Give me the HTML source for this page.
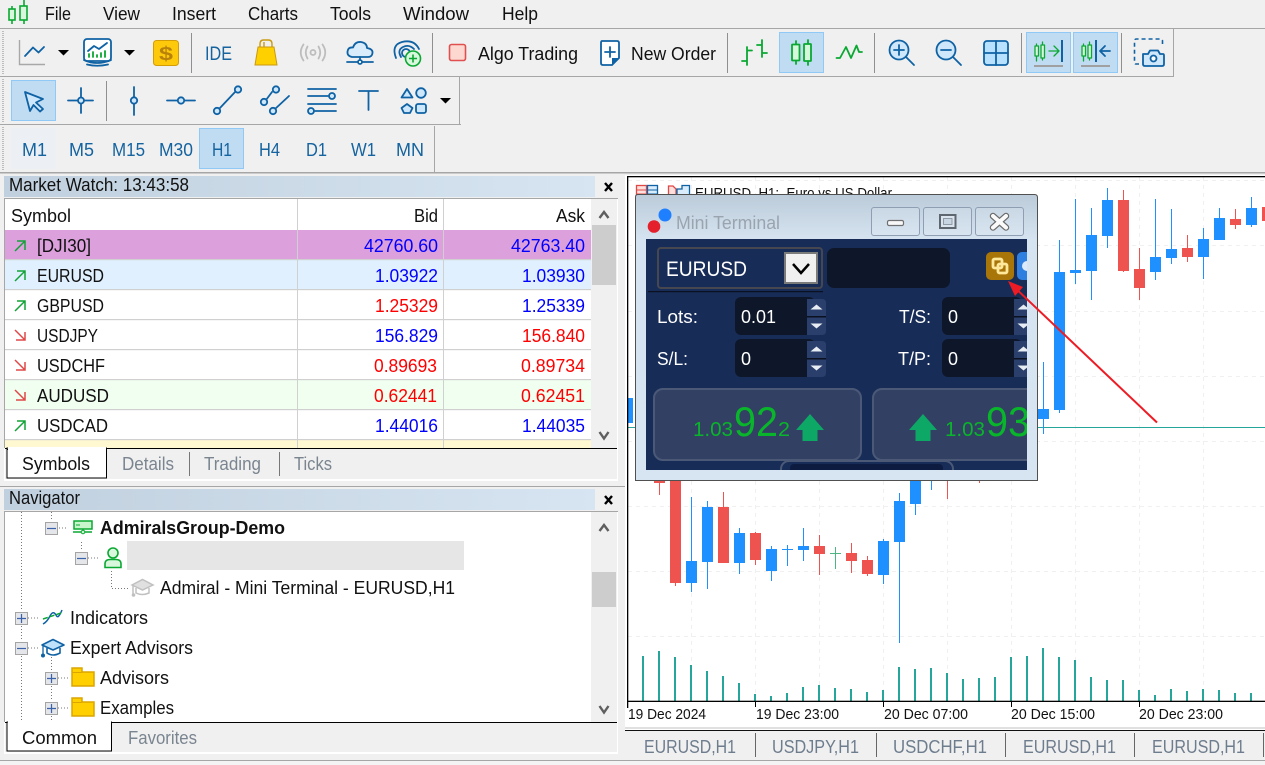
<!DOCTYPE html>
<html><head><meta charset="utf-8"><title>MetaTrader</title>
<style>
html,body{margin:0;padding:0;background:#f0f0f0;overflow:hidden}
svg{display:block}
text{font-family:"Liberation Sans",sans-serif;font-size:18px;fill:#111;white-space:pre}
.tf{fill:#15639f}
.tab{fill:#7a8590}
.btab{fill:#6e7d8e}
.ax{font-size:15px;fill:#111}
.blu{fill:#0000ff}.red{fill:#ff0000}
.w{fill:#fff}
.i{fill:none;stroke:#0f62a4;stroke-width:1.8;stroke-linecap:round;stroke-linejoin:round}
.g{fill:none;stroke:#0aa832;stroke-width:1.8;stroke-linecap:round;stroke-linejoin:round}
.dot{stroke:#777;stroke-width:1;stroke-dasharray:1 2;fill:none}
.box{fill:#e4e6ea;stroke:#a4a4a4;stroke-width:1}
.pm{stroke:#3b62a8;stroke-width:1.2;fill:none}
</style></head><body>
<svg width="1265" height="765" viewBox="0 0 1265 765" xmlns="http://www.w3.org/2000/svg">
<defs>
<linearGradient id="tb" x1="0" x2="1" y1="0" y2="0"><stop offset="0" stop-color="#c1d0de"/><stop offset="1" stop-color="#d7e5f2"/></linearGradient>
<linearGradient id="wb" x1="0" x2="0" y1="0" y2="1"><stop offset="0" stop-color="#bccbd9"/><stop offset=".16" stop-color="#d6e4f1"/><stop offset="1" stop-color="#d7e5f2"/></linearGradient>
<linearGradient id="bt" x1="0" x2="0" y1="0" y2="1"><stop offset="0" stop-color="#c9d7e4"/><stop offset="1" stop-color="#d8e5f1"/></linearGradient>
<clipPath id="chartclip"><rect x="628" y="177" width="637" height="524"/></clipPath>
<clipPath id="inner"><rect x="646" y="239" width="381" height="231"/></clipPath>
<clipPath id="titleclip"><rect x="628" y="177" width="637" height="18"/></clipPath>
</defs>
<rect width="1265" height="765" fill="#f0f0f0"/>

<!-- MENU -->
<g fill="none" stroke="#0aa832" stroke-width="1.6">
<path d="M12 6V24M24 0V24" /><rect x="9" y="9" width="6" height="11" fill="#d8f7dc"/><rect x="20" y="6" width="7" height="14" fill="#d8f7dc"/>
</g>
<text x="45" y="20" textLength="26" lengthAdjust="spacingAndGlyphs">File</text>
<text x="103" y="20" textLength="37" lengthAdjust="spacingAndGlyphs">View</text>
<text x="172" y="20" textLength="44" lengthAdjust="spacingAndGlyphs">Insert</text>
<text x="248" y="20" textLength="50" lengthAdjust="spacingAndGlyphs">Charts</text>
<text x="330" y="20" textLength="41" lengthAdjust="spacingAndGlyphs">Tools</text>
<text x="403" y="20" textLength="66" lengthAdjust="spacingAndGlyphs">Window</text>
<text x="502" y="20" textLength="36" lengthAdjust="spacingAndGlyphs">Help</text>
<rect x="0" y="28" width="1265" height="1" fill="#a6a6a6"/>

<!-- toolbar borders -->
<rect x="0" y="76" width="1174" height="1" fill="#a6a6a6"/><rect x="1173" y="29" width="1" height="48" fill="#a6a6a6"/>
<rect x="0" y="124" width="461" height="1" fill="#a6a6a6"/><rect x="459" y="77" width="1" height="48" fill="#a6a6a6"/>
<rect x="434" y="126" width="1" height="46" fill="#a6a6a6"/>
<rect x="0" y="172" width="1265" height="1.5" fill="#a6a6a6"/>
<g stroke="#bdbdbd" stroke-width="2" stroke-dasharray="1 1" fill="none"><path d="M3 31V75M3 79V123M3 127V171"/></g>
<!-- separators -->
<g fill="#8f8f8f"><rect x="191" y="33" width="1" height="40"/><rect x="432" y="33" width="1" height="40"/><rect x="727" y="33" width="1" height="40"/><rect x="874" y="33" width="1" height="40"/><rect x="1021" y="33" width="1" height="40"/><rect x="1121" y="33" width="1" height="40"/><rect x="106" y="81" width="1" height="40"/></g>
<!-- highlights -->
<g fill="#c0dcf3" stroke="#90c8f6"><rect x="779.5" y="32.5" width="44" height="40"/><rect x="1026.5" y="32.5" width="44" height="40"/><rect x="1073.5" y="32.5" width="44" height="40"/><rect x="11.5" y="80.5" width="44" height="40"/><rect x="199.5" y="128.5" width="44" height="40"/></g>
<rect x="11" y="128" width="45" height="41" fill="#ecf0f5"/>

<!-- toolbar 1 icons -->
<path d="M19.5 40V64.5H45" fill="none" stroke="#a8a8a8" stroke-width="1.4"/>
<path d="M25 56L33 47.500L38.500 52.500L44 47" class="i"/>
<path d="M58 50H69L63.500 55.500Z M124 50H135L129.500 55.500Z M440 98H451L445.500 103.500Z"/>
<rect x="84" y="39" width="27" height="22" rx="3" class="i" style="fill:#fff"/>
<path d="M87 64.500Q97 67 108 64.500" class="i"/><path d="M84 60Q97 66 111 60" class="i"/>
<path d="M88 51L94 46L99 49L107 43" class="i"/>
<path d="M89 57V54M93 57V52M97 57V55M101 57V53M105 57V51" class="g"/>
<rect x="153.500" y="40.500" width="25" height="25" rx="3" fill="#fdc90a" stroke="#d49c05"/>
<text x="159" y="60" textLength="14" lengthAdjust="spacingAndGlyphs" style="font-weight:bold;fill:#b8820a;font-size:19px">$</text>
<text x="205" y="60" textLength="27" lengthAdjust="spacingAndGlyphs" style="fill:#15639f;font-size:19px">IDE</text>
<path d="M258 47H274L277 65H255Z" fill="#ffd000" stroke="#c99a10"/><path d="M260 47V44Q260 40 263.500 40H268.500Q272 40 272 44V47M264 47V42" fill="none" stroke="#c99a10" stroke-width="1.4"/>
<g fill="none" stroke="#bdbdbd" stroke-width="1.8" stroke-linecap="round"><circle cx="313" cy="52.500" r="2.500"/><path d="M307.500 46.500Q304 52.500 307.500 58.500M318.500 46.500Q322 52.500 318.500 58.500M303.500 44.500Q298 52.500 303.500 60.500M322.500 44.500Q328 52.500 322.500 60.500"/></g>
<path d="M352 57Q347 56 347.500 51.500Q348 47 353 47.500Q355 41.500 361 42Q367 43 367 48Q373 49 372.500 53Q372 57 368 57Z" class="i" style="fill:#d9ecfb"/>
<path d="M347 62H373M360 57V62" class="i"/><circle cx="360" cy="62" r="2" class="i" style="fill:#fff"/>
<g class="i"><path d="M396 58Q391 45 402 42Q414 39 419 49"/><path d="M401 57Q397 50 403 47Q409 44 414 49"/><circle cx="406" cy="53" r="4"/></g>
<circle cx="413" cy="58.500" r="7.500" fill="#d8f7dc" stroke="#0aa832" stroke-width="1.6"/><path d="M413 54.500V62.500M409 58.500H417" stroke="#0aa832" stroke-width="1.6"/>
<rect x="449.500" y="44.500" width="16" height="16" rx="2" fill="#fdd8d0" stroke="#e05050" stroke-width="1.6"/>
<text x="478" y="60" textLength="100" lengthAdjust="spacingAndGlyphs">Algo Trading</text>
<path d="M602 41H617Q619 41 619 43V58L612 65H603Q601 65 601 63V43Q601 41 602 41Z" class="i" style="fill:#fff"/><path d="M612 65V58H619Z" fill="#0f62a4"/><path d="M610 47V57M605 52H615" class="i"/>
<text x="631" y="60" textLength="85" lengthAdjust="spacingAndGlyphs">New Order</text>
<!-- bars -->
<g class="g"><path d="M747 47V65M742 61H747M747 50.500H752"/><path d="M762 40V57M757 45H762M762 53H767"/></g>
<g class="g"><path d="M796 41V64M808 40V65"/><rect x="792" y="44.500" width="7.500" height="16" rx=".5" fill="#d6f8da" style="fill:#d6f8da"/><rect x="804" y="44" width="7" height="17" rx=".5" style="fill:#d6f8da"/></g>
<path d="M836.500 58H840L846 47L851 58L856.500 45.500L859 52H862" class="g"/>
<!-- zoom etc -->
<g class="i"><circle cx="899" cy="50" r="9.500" style="fill:#cfe7fb"/><path d="M906 57L914 65M899 45V55M894 50H904"/></g>
<g class="i"><circle cx="946" cy="50" r="9.500" style="fill:#cfe7fb"/><path d="M953 57L961 65M941 50H951"/></g>
<rect x="984" y="41" width="24" height="24" rx="3" class="i" style="fill:#b8e0ff"/><path d="M996 41V65M984 53H1008" class="i"/>
<!-- shift -->
<g class="g" style="stroke-width:1.3"><path d="M1036.500 44V61M1042.500 42V60"/><rect x="1035" y="46" width="3.500" height="10" style="fill:#d6f8da"/><rect x="1041" y="45" width="3.500" height="13" style="fill:#d6f8da"/><path d="M1049 51H1058M1054 46L1059 51L1054 56"/></g>
<rect x="1061" y="40" width="2" height="22" fill="#0f62a4"/><rect x="1034" y="65" width="29" height="2" fill="#a0a0a0"/>
<g class="g" style="stroke-width:1.3"><path d="M1083.500 44V61M1089.500 42V60"/><rect x="1082" y="46" width="3.500" height="10" style="fill:#d6f8da"/><rect x="1088" y="45" width="3.500" height="13" style="fill:#d6f8da"/></g>
<rect x="1095" y="40" width="2" height="22" fill="#0f62a4"/><path d="M1110 51H1100M1105 46L1100 51L1105 56" class="i"/><rect x="1081" y="65" width="29" height="2" fill="#a0a0a0"/>
<!-- camera -->
<path d="M1139 64H1136Q1134.500 64 1134.500 62V41Q1134.500 39 1136.500 39H1160Q1162.500 39 1162.500 41V44" fill="none" stroke="#0f62a4" stroke-width="1.6" stroke-dasharray="4 3"/>
<path d="M1143 54H1148L1150 50.500H1158L1160 54H1163Q1164 54 1164 55.500V64Q1164 66 1162 66H1145Q1143 66 1143 64Z" class="i" style="fill:#cfe7fb"/><circle cx="1153.500" cy="58.500" r="3" class="i" style="fill:#fff"/>

<!-- toolbar 2 icons -->
<path d="M25 92L43 99L36 102.500L43 109L40 111.500L33.500 105L30 111Z" class="i" style="fill:#cfe7fb"/>
<path d="M68 100.500H93M81 88V113" class="i"/><circle cx="81" cy="100.500" r="3" class="i" style="fill:#cfe7fb"/>
<path d="M134 87V115" class="i"/><circle cx="134" cy="100.500" r="3.200" class="i" style="fill:#cfe7fb"/>
<path d="M167 100.500H195" class="i"/><circle cx="181" cy="100.500" r="3.200" class="i" style="fill:#cfe7fb"/>
<path d="M219 109L236 91" class="i"/><circle cx="217" cy="111" r="3.200" class="i" style="fill:#cfe7fb"/><circle cx="238" cy="89.500" r="3.200" class="i" style="fill:#cfe7fb"/>
<path d="M266 100L272 92M275 109L289 96" class="i"/><circle cx="264" cy="102" r="3.200" class="i" style="fill:#cfe7fb"/><circle cx="273" cy="111" r="3.200" class="i" style="fill:#cfe7fb"/><circle cx="276" cy="89.500" r="3.200" class="i" style="fill:#cfe7fb"/>
<path d="M308 89H336M308 96H328M308 104H336M315 111H336" class="i"/><circle cx="332" cy="96" r="3" class="i" style="fill:#cfe7fb"/><circle cx="311" cy="111" r="3" class="i" style="fill:#cfe7fb"/>
<path d="M359 91H378M368.500 91V110" class="i"/>
<g class="i" style="fill:#cfe7fb"><path d="M407 89L412.500 97.500H401.500Z"/><circle cx="421" cy="93" r="4.800"/><path d="M407 104L412.500 108L410 113H404L401.500 108Z"/><rect x="416" y="104" width="10" height="9" rx="2"/></g>

<!-- timeframes -->
<text class="tf" x="22" y="156" textLength="25" lengthAdjust="spacingAndGlyphs">M1</text>
<text class="tf" x="69" y="156" textLength="25" lengthAdjust="spacingAndGlyphs">M5</text>
<text class="tf" x="112" y="156" textLength="33" lengthAdjust="spacingAndGlyphs">M15</text>
<text class="tf" x="159" y="156" textLength="34" lengthAdjust="spacingAndGlyphs">M30</text>
<text class="tf" x="212" y="156" textLength="20" lengthAdjust="spacingAndGlyphs">H1</text>
<text class="tf" x="259" y="156" textLength="21" lengthAdjust="spacingAndGlyphs">H4</text>
<text class="tf" x="306" y="156" textLength="21" lengthAdjust="spacingAndGlyphs">D1</text>
<text class="tf" x="351" y="156" textLength="25" lengthAdjust="spacingAndGlyphs">W1</text>
<text class="tf" x="396" y="156" textLength="28" lengthAdjust="spacingAndGlyphs">MN</text>

<!-- MARKET WATCH -->
<rect x="4" y="176" width="591" height="21" fill="url(#tb)"/>
<text x="9" y="191" textLength="180" lengthAdjust="spacingAndGlyphs">Market Watch: 13:43:58</text>
<path d="M605 183L612 191M612 183L605 191" stroke="#000" stroke-width="2.400"/>
<rect x="4" y="198" width="614" height="283" fill="#fff"/>
<rect x="4" y="198" width="614" height="1" fill="#a6a6a6"/><rect x="4" y="198" width="1" height="250" fill="#a6a6a6"/>
<rect x="591" y="199" width="26" height="249" fill="#f0f0f0"/>
<rect x="592" y="225" width="24" height="60" fill="#cdcdcd"/>
<path d="M599.500 218L604 212L608.500 218M599.500 432L604 438.500L608.500 432" fill="none" stroke="#5f5f5f" stroke-width="2.400"/>
<rect x="5" y="230" width="586" height="30" fill="#dca0dc"/>
<rect x="5" y="260" width="586" height="30" fill="#e0f0ff"/>
<rect x="5" y="380" width="586" height="30" fill="#f0fff0"/>
<rect x="5" y="440" width="586" height="8" fill="#fff8d0"/>
<g fill="#d0d0d0"><rect x="5" y="259" width="586" height="1.200"/><rect x="5" y="289" width="586" height="1.200"/><rect x="5" y="319" width="586" height="1.200"/><rect x="5" y="349" width="586" height="1.200"/><rect x="5" y="379" width="586" height="1.200"/><rect x="5" y="409" width="586" height="1.200"/><rect x="5" y="439" width="586" height="1.200"/><rect x="297" y="199" width="1" height="249"/><rect x="443" y="199" width="1" height="249"/></g>
<text x="11" y="222" textLength="60" lengthAdjust="spacingAndGlyphs">Symbol</text>
<text x="414" y="222" textLength="24" lengthAdjust="spacingAndGlyphs">Bid</text>
<text x="556" y="222" textLength="29" lengthAdjust="spacingAndGlyphs">Ask</text>
<g fill="none" stroke-width="1.500">
<path d="M15 251L25 241M17 241H25V250" stroke="#12a336"/><path d="M15 281L25 271M17 271H25V280" stroke="#12a336"/><path d="M15 311L25 301M17 301H25V310" stroke="#12a336"/><path d="M15 431L25 421M17 421H25V430" stroke="#12a336"/>
<path d="M15 330L25 340M25 332V340H16" stroke="#e04848"/><path d="M15 360L25 370M25 362V370H16" stroke="#e04848"/><path d="M15 390L25 400M25 392V400H16" stroke="#e04848"/>
</g>
<text x="37" y="252" textLength="54" lengthAdjust="spacingAndGlyphs">[DJI30]</text>
<text x="37" y="282" textLength="67" lengthAdjust="spacingAndGlyphs">EURUSD</text>
<text x="37" y="312" textLength="67" lengthAdjust="spacingAndGlyphs">GBPUSD</text>
<text x="37" y="342" textLength="61" lengthAdjust="spacingAndGlyphs">USDJPY</text>
<text x="37" y="372" textLength="68" lengthAdjust="spacingAndGlyphs">USDCHF</text>
<text x="37" y="402" textLength="72" lengthAdjust="spacingAndGlyphs">AUDUSD</text>
<text x="37" y="432" textLength="71" lengthAdjust="spacingAndGlyphs">USDCAD</text>
<text class="blu" x="364" y="252" textLength="74" lengthAdjust="spacingAndGlyphs">42760.60</text><text class="blu" x="511" y="252" textLength="74" lengthAdjust="spacingAndGlyphs">42763.40</text>
<text class="blu" x="375" y="282" textLength="63" lengthAdjust="spacingAndGlyphs">1.03922</text><text class="blu" x="522" y="282" textLength="63" lengthAdjust="spacingAndGlyphs">1.03930</text>
<text class="red" x="375" y="312" textLength="63" lengthAdjust="spacingAndGlyphs">1.25329</text><text class="blu" x="522" y="312" textLength="63" lengthAdjust="spacingAndGlyphs">1.25339</text>
<text class="blu" x="375" y="342" textLength="63" lengthAdjust="spacingAndGlyphs">156.829</text><text class="red" x="522" y="342" textLength="63" lengthAdjust="spacingAndGlyphs">156.840</text>
<text class="red" x="374" y="372" textLength="63" lengthAdjust="spacingAndGlyphs">0.89693</text><text class="red" x="521" y="372" textLength="64" lengthAdjust="spacingAndGlyphs">0.89734</text>
<text class="red" x="374" y="402" textLength="63" lengthAdjust="spacingAndGlyphs">0.62441</text><text class="red" x="521" y="402" textLength="64" lengthAdjust="spacingAndGlyphs">0.62451</text>
<text class="blu" x="375" y="432" textLength="63" lengthAdjust="spacingAndGlyphs">1.44016</text><text class="blu" x="522" y="432" textLength="63" lengthAdjust="spacingAndGlyphs">1.44035</text>
<!-- tabs -->
<rect x="5" y="449" width="612" height="30" fill="#f0f0f0"/>
<rect x="5" y="448" width="612" height="1" fill="#000"/>
<rect x="7" y="448" width="99.500" height="30" fill="#fff" stroke="#000" stroke-width="1"/>
<rect x="8" y="447" width="98" height="3" fill="#fff"/><rect x="7" y="449" width="1" height="1" fill="#000"/>
<text x="22" y="470" textLength="68" lengthAdjust="spacingAndGlyphs">Symbols</text>
<text class="tab" x="122" y="470" textLength="52" lengthAdjust="spacingAndGlyphs">Details</text>
<text class="tab" x="204" y="470" textLength="57" lengthAdjust="spacingAndGlyphs">Trading</text>
<text class="tab" x="294" y="470" textLength="38" lengthAdjust="spacingAndGlyphs">Ticks</text>
<rect x="189" y="452" width="1" height="24" fill="#777"/><rect x="279" y="452" width="1" height="24" fill="#777"/>
<rect x="0" y="481" width="622" height="5" fill="#f0f0f0"/>
<rect x="0" y="486" width="625" height="1" fill="#a6a6a6"/>

<!-- NAVIGATOR -->
<rect x="4" y="489" width="591" height="21" fill="url(#tb)"/>
<text x="9" y="504" textLength="71" lengthAdjust="spacingAndGlyphs">Navigator</text>
<path d="M605 496L612 504M612 496L605 504" stroke="#000" stroke-width="2.400"/>
<rect x="4" y="511" width="614" height="243" fill="#fff"/>
<rect x="4" y="511" width="614" height="1" fill="#a6a6a6"/><rect x="4" y="511" width="1" height="211" fill="#a6a6a6"/>
<rect x="591" y="512" width="26" height="210" fill="#f0f0f0"/>
<rect x="592" y="572" width="24" height="35" fill="#cdcdcd"/>
<path d="M599.500 531L604 525L608.500 531M599.500 706L604 712.500L608.500 706" fill="none" stroke="#5f5f5f" stroke-width="2.400"/>
<rect x="127" y="541" width="337" height="29" fill="#e6e6e6"/>
<!-- tree lines -->
<path class="dot" d="M21.500 512V611M21.500 626V641M21.500 656V720M51.500 512V521M51.500 657V671M51.500 686V701M51.500 716V720M81.500 542V551M111.500 571V588.500H128M59 528H68M88 558H98M28 618H38M28 648H38M58 678H68M58 708H68"/>
<g><rect class="box" x="45.500" y="522.500" width="12" height="12"/><path class="pm" d="M47 528.500H56"/>
<rect class="box" x="75.500" y="552.500" width="12" height="12"/><path class="pm" d="M77 558.500H86"/>
<rect class="box" x="15.500" y="612.500" width="12" height="12"/><path class="pm" d="M17 618.500H26M21.500 614V623"/>
<rect class="box" x="15.500" y="642.500" width="12" height="12"/><path class="pm" d="M17 648.500H26"/>
<rect class="box" x="45.500" y="672.500" width="12" height="12"/><path class="pm" d="M47 678.500H56M51.500 674V683"/>
<rect class="box" x="45.500" y="702.500" width="12" height="12"/><path class="pm" d="M47 708.500H56M51.500 704V713"/></g>
<!-- tree icons -->
<rect x="74" y="521" width="18" height="8" fill="#c8f5cc" stroke="#0aa832" stroke-width="1.500"/><path d="M76 525H80" stroke="#0aa832"/><path d="M73 532H92M83 529V534" stroke="#0aa832" stroke-width="1.500" fill="none"/><circle cx="83" cy="532" r="1.800" fill="#c8f5cc" stroke="#0aa832"/>
<circle cx="113" cy="553" r="5" fill="#d8f7dc" stroke="#0aa832" stroke-width="1.600"/><path d="M105 567.500V564Q105 559.500 110 559.500H116Q121 559.500 121 564V567.500Z" fill="#d8f7dc" stroke="#0aa832" stroke-width="1.600"/>
<g fill="none" stroke="#c0c0c0" stroke-width="1.500"><path d="M132 585L142.500 579.500L153 585L142.500 590Z" fill="#e0e0e0"/><path d="M136 588V593Q142 596 149 593V588"/><path d="M133 586V594"/></g><circle cx="133.500" cy="595" r="1.800" fill="#c0c0c0"/>
<path d="M43 624Q47 622 50 616Q53 610 56 615Q58 620 62 610" fill="none" stroke="#0f62a4" stroke-width="1.500"/><path d="M43 619L61 613" stroke="#0aa832" stroke-width="1.500" stroke-dasharray="5 2"/>
<path d="M42 645L53 639.500L64 645L53 650Z" fill="#bfe2fb" stroke="#0f62a4" stroke-width="1.600" stroke-linejoin="round"/><path d="M47 648V653Q53 657 60 653V648" fill="none" stroke="#0f62a4" stroke-width="1.600"/><path d="M43 646V655" stroke="#0f62a4" stroke-width="1.300"/><circle cx="43" cy="655.500" r="2" fill="#0f62a4"/>
<path d="M72 668H82V672H94V686H72Z" fill="#ffcf00" stroke="#dca600" stroke-width="1.500"/><path d="M72 672.500H82" stroke="#dca600"/>
<path d="M72 698H82V702H94V716H72Z" fill="#ffcf00" stroke="#dca600" stroke-width="1.500"/><path d="M72 702.500H82" stroke="#dca600"/>
<text x="100" y="534" textLength="185" lengthAdjust="spacingAndGlyphs" style="font-weight:bold">AdmiralsGroup-Demo</text>
<text x="160" y="594" textLength="295" lengthAdjust="spacingAndGlyphs">Admiral - Mini Terminal - EURUSD,H1</text>
<text x="70" y="624" textLength="78" lengthAdjust="spacingAndGlyphs">Indicators</text>
<text x="70" y="654" textLength="123" lengthAdjust="spacingAndGlyphs">Expert Advisors</text>
<text x="100" y="684" textLength="69" lengthAdjust="spacingAndGlyphs">Advisors</text>
<text x="100" y="714" textLength="74" lengthAdjust="spacingAndGlyphs">Examples</text>
<rect x="5" y="723" width="612" height="29" fill="#f0f0f0"/>
<rect x="5" y="722" width="612" height="1" fill="#000"/>
<rect x="7" y="722" width="104.500" height="29" fill="#fff" stroke="#000"/>
<rect x="8" y="721" width="103" height="3" fill="#fff"/>
<text x="22" y="744" textLength="75" lengthAdjust="spacingAndGlyphs">Common</text>
<text class="tab" x="128" y="744" textLength="69" lengthAdjust="spacingAndGlyphs">Favorites</text>
<rect x="0" y="755" width="622" height="5" fill="#f0f0f0"/>
<rect x="0" y="760" width="1265" height="1" fill="#a6a6a6"/>
<rect x="0" y="761" width="1265" height="4" fill="#f4f4f4"/>

<!-- CHART -->
<rect x="625" y="175" width="640" height="555" fill="#fff"/>
<g clip-path="url(#chartclip)">
<path d="M691.500 177V701M755.500 177V701M819.500 177V701M883.500 177V701M947.500 177V701M1011.500 177V701M1075.500 177V701M1139.500 177V701M1203.500 177V701M628 180.500H1265M628 245.500H1265M628 311.500H1265M628 376.500H1265M628 441.500H1265M628 506.500H1265M628 571.500H1265M628 636.500H1265" stroke="#f0f0f0" stroke-width="1" stroke-dasharray="4 4" fill="none"/>
<path d="M628 427.500H1265" stroke="#26a69a" stroke-width="1"/>
<!-- volumes -->
<path fill="none" stroke="#26a69a" stroke-width="2" d="M643 656V701M659 651V701M675 657V701M691 665V701M707 671V701M723 676V701M739 683V701M755 694V701M771 696V701M787 693V701M803 687V701M819 685V701M835 688V701M851 689V701M867 692V701M883 690V701M899 667V701M915 669V701M931 668V701M947 673V701M963 679V701M979 678V701M995 677V701M1011 657V701M1027 656V701M1043 648V701M1059 657V701M1075 660V701M1091 677V701M1107 680V701M1123 680V701M1139 690V701M1155 695V701M1171 689V701M1187 691V701M1203 689V701M1219 690V701M1235 693V701M1251 693V701"/>
<!-- blue wicks -->
<path fill="none" stroke="#1e90ff" stroke-width="1" d="M691.500 497V592M707.500 501V589M739.500 528V574M771.500 546V581M787.500 545V566M803.500 528V561M883.500 539V584M899.500 493V643M915.500 470V515M931.500 470V490M1043.500 362V434M1059.500 240V413M1075.500 199V284M1091.500 208V300M1107.500 188V248M1155.500 199V280M1171.500 209V264M1203.500 228V279M1219.500 208V240M1251.500 197V227"/>
<!-- blue bodies -->
<path fill="none" stroke="#1e90ff" stroke-width="11" d="M691.500 561V583M707.500 507V562M739.500 533V563M771.500 549V571M787.500 549V550M803.500 546V550M883.500 541V575M899.500 501V542M915.500 470V504M1043.500 409V419M1059.500 272V410M1075.500 270V273M1091.500 235V271M1107.500 200V236M1155.500 257V272M1171.500 249V258M1203.500 239V257M1219.500 218V240M1251.500 208V225M627.500 398V423"/>
<!-- red wicks -->
<path fill="none" stroke="#ef5350" stroke-width="1" d="M659.500 470V495M675.500 470V586M723.500 492V563M755.500 532V565M819.500 535V575M851.500 543V573M867.500 556V576M947.500 470V499M979.500 470V483M1123.500 190V272M1139.500 248V300M1187.500 235V262M1235.500 209V229"/>
<!-- red bodies -->
<path fill="none" stroke="#ef5350" stroke-width="11" d="M659.500 470V483M675.500 470V583M723.500 507V563M755.500 533V560M819.500 546V554M851.500 553V561M867.500 560V574M1123.500 200V271M1139.500 269V288M1187.500 248V257M1235.500 219V225M1267.500 207V221"/>
<path fill="none" stroke="#4cb582" stroke-width="1" d="M835.500 547V569M830 553.500H841"/>
</g>
<rect x="627" y="176" width="638" height="1.300" fill="#000"/>
<rect x="627" y="176" width="1.300" height="532" fill="#000"/>
<rect x="627" y="700.700" width="638" height="1.300" fill="#000"/>
<path d="M755.500 701V707M883.500 701V707M1011.500 701V707M1139.500 701V707" stroke="#000"/>
<text class="ax" x="628" y="719" textLength="78" lengthAdjust="spacingAndGlyphs">19 Dec 2024</text>
<text class="ax" x="756" y="719" textLength="83" lengthAdjust="spacingAndGlyphs">19 Dec 23:00</text>
<text class="ax" x="884" y="719" textLength="84" lengthAdjust="spacingAndGlyphs">20 Dec 07:00</text>
<text class="ax" x="1011" y="719" textLength="84" lengthAdjust="spacingAndGlyphs">20 Dec 15:00</text>
<text class="ax" x="1139" y="719" textLength="84" lengthAdjust="spacingAndGlyphs">20 Dec 23:00</text>
<!-- chart tab bar -->
<rect x="625" y="727" width="640" height="2" fill="#e0e0e0"/>
<rect x="625" y="730" width="640" height="1.200" fill="#111"/>
<rect x="625" y="731" width="640" height="29" fill="#f0f0f0"/>
<g fill="#666"><rect x="755" y="733" width="1" height="24"/><rect x="876" y="733" width="1" height="24"/><rect x="1005" y="733" width="1" height="24"/><rect x="1134" y="733" width="1" height="24"/><rect x="1263" y="733" width="1" height="24"/></g>
<text class="btab" x="644" y="753" textLength="92" lengthAdjust="spacingAndGlyphs">EURUSD,H1</text>
<text class="btab" x="772" y="753" textLength="87" lengthAdjust="spacingAndGlyphs">USDJPY,H1</text>
<text class="btab" x="893" y="753" textLength="94" lengthAdjust="spacingAndGlyphs">USDCHF,H1</text>
<text class="btab" x="1023" y="753" textLength="93" lengthAdjust="spacingAndGlyphs">EURUSD,H1</text>
<text class="btab" x="1152" y="753" textLength="93" lengthAdjust="spacingAndGlyphs">EURUSD,H1</text>
<!-- chart title (clipped by window) -->
<g clip-path="url(#titleclip)">
<rect x="636.500" y="185.500" width="10" height="14" fill="#fde0dc" stroke="#e04848" stroke-width="1.300"/><path d="M637 190H646M637 194H646" stroke="#e04848"/>
<rect x="647.500" y="185.500" width="10" height="14" fill="#d9ecfb" stroke="#0f62a4" stroke-width="1.300"/><path d="M648 190H657M648 194H657" stroke="#0f62a4"/>
<path d="M668.500 186H673L676 189V200H668.500Z" fill="#fde0dc" stroke="#e04848" stroke-width="1.300"/>
<path d="M677 193V189H682V185.500H689.500V200H677Z" fill="#d9ecfb" stroke="#0f62a4" stroke-width="1.300"/>
<text x="695" y="198" textLength="197" lengthAdjust="spacingAndGlyphs" style="font-size:15px">EURUSD, H1:  Euro vs US Dollar</text>
</g>

<!-- MINI TERMINAL WINDOW -->
<path d="M638 194.500H1034.500Q1037.500 194.500 1037.500 197.500V480.500H635.500V197Q635.500 194.500 638 194.500Z" fill="url(#wb)" stroke="#505050" stroke-width="1"/>
<circle cx="665" cy="215" r="6.500" fill="#1e7fff"/><circle cx="654" cy="226.500" r="6.300" fill="#e3202c"/>
<text x="676" y="229" textLength="104" lengthAdjust="spacingAndGlyphs" style="fill:#9aa4af">Mini Terminal</text>
<g fill="url(#bt)" stroke="#8f9eb2"><rect x="871.500" y="207.500" width="48" height="28" rx="2.500"/><rect x="923.500" y="207.500" width="48" height="28" rx="2.500"/><rect x="975.500" y="207.500" width="48" height="28" rx="2.500"/></g>
<rect x="887.500" y="220.500" width="16" height="5" rx="1.500" fill="#f8f8f8" stroke="#707070" stroke-width="1.200"/>
<rect x="940" y="215" width="15.500" height="13" fill="#d9e4ee" stroke="#5e6670" stroke-width="2"/><rect x="943.500" y="218.500" width="8.500" height="6" fill="#c8d6e3" stroke="#7f8a96" stroke-width=".8"/>
<path d="M993 216L1006 227.500M1006 216L993 227.500" stroke="#6a6a6a" stroke-width="6.500" stroke-linecap="round"/><path d="M993 216L1006 227.500M1006 216L993 227.500" stroke="#fafafa" stroke-width="4" stroke-linecap="round"/>

<rect x="646" y="239" width="381" height="231" fill="#182c58"/>
<g clip-path="url(#inner)">
<rect x="658" y="248" width="164" height="40" rx="3" fill="#182c58" stroke="#47484f" stroke-width="2"/>
<rect x="648" y="291" width="175" height="1.200" fill="#0b1120"/>
<rect x="785" y="253" width="32" height="30" fill="#f0f0f0" stroke="#7b7b7b" stroke-width="2"/>
<path d="M793 264L801 273L809 264" fill="none" stroke="#000" stroke-width="2.500"/>
<text class="w" x="666" y="276" textLength="81" lengthAdjust="spacingAndGlyphs" style="font-size:21px">EURUSD</text>
<rect x="827" y="248" width="123" height="40" rx="7" fill="#0e1729"/>
<rect x="986" y="252" width="28" height="28" rx="5" fill="#a87508"/>
<rect x="993" y="259" width="9" height="9" rx="1.500" fill="none" stroke="#ffe89a" stroke-width="2.800"/><rect x="998" y="264" width="9" height="9" rx="1.500" fill="none" stroke="#ffe89a" stroke-width="2.800"/>
<rect x="1017" y="252" width="20" height="28" rx="5" fill="#2f7fe0"/><circle cx="1027" cy="266" r="5" fill="#dbeafb"/>
<!-- inputs -->
<g fill="#0e1729"><rect x="735" y="297" width="80" height="38" rx="6"/><rect x="735" y="339" width="80" height="38" rx="6"/><rect x="942" y="297" width="80" height="38" rx="6"/><rect x="942" y="339" width="80" height="38" rx="6"/></g>
<g fill="#2a3f6b"><path d="M807 299H822Q826 299 826 303V316H807ZM807 317.500H826V331Q826 335 822 335H807ZM807 341H822Q826 341 826 345V358H807ZM807 359.500H826V373Q826 377 822 377H807ZM1014 299H1029Q1033 299 1033 303V316H1014ZM1014 317.500H1033V331Q1033 335 1029 335H1014ZM1014 341H1029Q1033 341 1033 345V358H1014ZM1014 359.500H1033V373Q1033 377 1029 377H1014Z"/></g>
<g fill="#0b1120"><rect x="807" y="316" width="19" height="1.500"/><rect x="807" y="358" width="19" height="1.500"/><rect x="1014" y="316" width="19" height="1.500"/><rect x="1014" y="358" width="19" height="1.500"/></g>
<g fill="#e8edf4"><path d="M810.500 309.500L816.500 304.500L822.500 309.500ZM810.500 323.500H822.500L816.500 328.500ZM810.500 351.500L816.500 346.500L822.500 351.500ZM810.500 365.500H822.500L816.500 370.500ZM1017.500 309.500L1023.500 304.500L1029.500 309.500ZM1017.500 323.500H1029.500L1023.500 328.500ZM1017.500 351.500L1023.500 346.500L1029.500 351.500ZM1017.500 365.500H1029.500L1023.500 370.500Z"/></g>
<text class="w" x="657" y="323" textLength="41" lengthAdjust="spacingAndGlyphs">Lots:</text>
<text class="w" x="657" y="365" textLength="31" lengthAdjust="spacingAndGlyphs">S/L:</text>
<text class="w" x="899" y="323" textLength="32" lengthAdjust="spacingAndGlyphs">T/S:</text>
<text class="w" x="898" y="365" textLength="33" lengthAdjust="spacingAndGlyphs">T/P:</text>
<text class="w" x="741" y="323" textLength="35" lengthAdjust="spacingAndGlyphs">0.01</text>
<text class="w" x="741" y="365" textLength="10">0</text>
<text class="w" x="948" y="323" textLength="10">0</text>
<text class="w" x="948" y="365" textLength="10">0</text>
<!-- buy/sell -->
<rect x="654" y="389" width="207" height="71" rx="9" fill="#324063" stroke="#4b5977" stroke-width="2"/>
<rect x="873" y="389" width="207" height="71" rx="9" fill="#324063" stroke="#4b5977" stroke-width="2"/>
<rect x="781" y="461" width="172" height="30" rx="8" fill="#182c58" stroke="#4b5977" stroke-width="2"/>
<rect x="790" y="464" width="153" height="10" rx="4" fill="#0e1b40"/>
<text x="693" y="436" textLength="40" lengthAdjust="spacingAndGlyphs" style="fill:#09b52a;font-size:20px">1.03</text>
<text x="734" y="436" textLength="44" lengthAdjust="spacingAndGlyphs" style="fill:#09b52a;font-size:42px">92</text>
<text x="778" y="436" textLength="12" lengthAdjust="spacingAndGlyphs" style="fill:#09b52a;font-size:20px">2</text>
<text x="945" y="436" textLength="40" lengthAdjust="spacingAndGlyphs" style="fill:#09b52a;font-size:20px">1.03</text>
<text x="986" y="436" textLength="44" lengthAdjust="spacingAndGlyphs" style="fill:#09b52a;font-size:42px">93</text>
<path d="M810 414L824 430H817.500V441H802.500V430H796Z" fill="#0da866"/>
<path d="M923 414L937 430H930.500V441H915.500V430H909Z" fill="#0da866"/>
</g>
<!-- red annotation arrow -->
<path d="M1157 422.500L1012 285" fill="none" stroke="#ed1c24" stroke-width="2"/>
<path d="M1008 281L1023 287L1015 296Z" fill="#ed1c24"/>
</svg>
</body></html>
